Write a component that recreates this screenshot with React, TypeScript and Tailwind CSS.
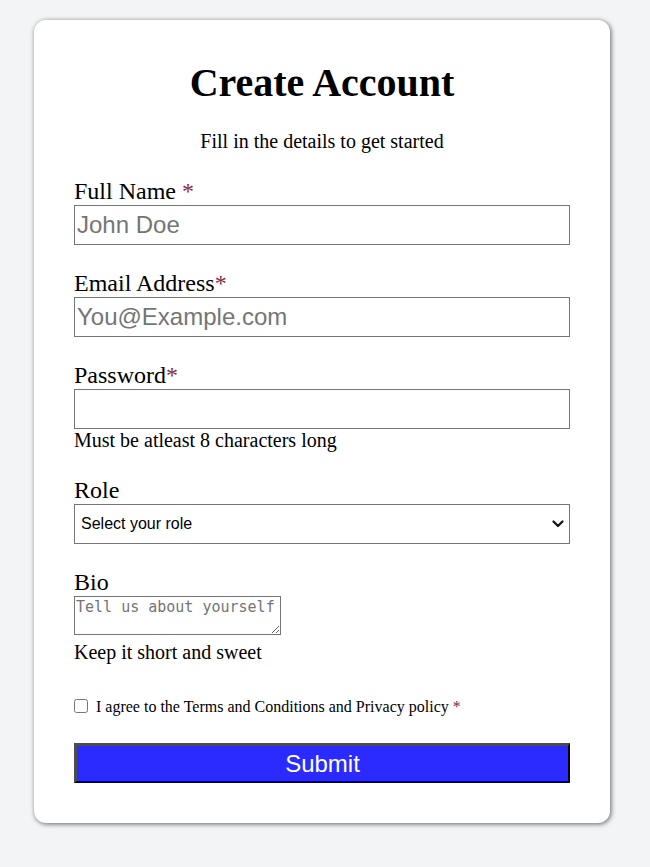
import { useState } from "react";

type FieldProps = {
  label: string;
  required?: boolean;
  spaced?: boolean;
  children: React.ReactNode;
};

function Field({ label, required, spaced, children }: FieldProps) {
  return (
    <div className="mb-6">
      <label className="block text-2xl leading-[28px]">
        {label}
        {required && (
          <span className="text-[#8b1f3f]">{spaced ? " *" : "*"}</span>
        )}
      </label>
      {children}
    </div>
  );
}

const inputClass =
  "block w-full h-10 border border-[#767676] px-[2px] py-[1px] text-2xl font-['Liberation_Sans',Arial,sans-serif] placeholder:text-[#757575] outline-none";

export default function App() {
  const [agreed, setAgreed] = useState(false);

  return (
    <div className="min-h-screen bg-[#f3f4f6] pt-5 pb-[45px] font-['Liberation_Serif','Times_New_Roman',serif] text-black">
      <div className="ml-[34px] w-[576px] rounded-xl bg-white p-10 shadow-[1px_1px_5px_rgba(0,0,0,0.6)]">
        <h1 className="text-center text-[40px] font-bold leading-[46px]">
          Create Account
        </h1>
        <p className="mt-6 text-center text-xl leading-[23px]">
          Fill in the details to get started
        </p>

        <form className="mt-6" onSubmit={(e) => e.preventDefault()}>
          <Field label="Full Name" required spaced>
            <input type="text" placeholder="John Doe" className={inputClass} />
          </Field>

          <Field label="Email Address" required>
            <input
              type="email"
              placeholder="You@Example.com"
              className={inputClass}
            />
          </Field>

          <Field label="Password" required>
            <input type="password" className={inputClass} />
            <p className="text-xl leading-[23px]">
              Must be atleast 8 characters long
            </p>
          </Field>

          <Field label="Role">
            <div className="relative">
              <select className="block h-10 w-full appearance-none border border-[#767676] bg-white pl-[6px] text-base font-['Liberation_Sans',Arial,sans-serif] text-black outline-none">
                <option>Select your role</option>
                <option>Student</option>
                <option>Developer</option>
                <option>Designer</option>
              </select>
              <svg
                className="pointer-events-none absolute right-[6px] top-[16px]"
                width="12"
                height="8"
                viewBox="0 0 12 8"
                fill="none"
              >
                <path
                  d="M1.5 1.5 6 6l4.5-4.5"
                  stroke="#111"
                  strokeWidth="2.2"
                  strokeLinecap="round"
                  strokeLinejoin="round"
                />
              </svg>
            </div>
          </Field>

          <div>
            <label className="block text-2xl leading-[28px]">Bio</label>
            <textarea
              placeholder="Tell us about yourself"
              className="block h-[39px] w-[207px] resize border border-[#767676] px-[1px] py-[2px] text-[15px] leading-[17px] font-['DejaVu_Sans_Mono',monospace] placeholder:text-[#757575] outline-none"
            />
            <p className="mt-[6px] text-xl leading-[23px]">
              Keep it short and sweet
            </p>
          </div>

          <div className="mt-[34px] flex items-start">
            <input
              type="checkbox"
              checked={agreed}
              onChange={(e) => setAgreed(e.target.checked)}
              className="mt-[1px] h-[14px] w-[14px]"
            />
            <span className="ml-2 text-base leading-[18.4px]">
              I agree to the Terms and Conditions and Privacy policy{" "}
              <span className="text-[#8b1f3f]">*</span>
            </span>
          </div>

          <button
            type="submit"
            className="mt-[27px] block h-10 w-full border-t-[3px] border-l-[3px] border-r-2 border-b-2 border-t-[#4d4d4d] border-l-[#4d4d4d] border-r-black border-b-black bg-[#2b2bff] text-2xl font-['Liberation_Sans',Arial,sans-serif] text-white"
          >
            Submit
          </button>
        </form>
      </div>
    </div>
  );
}
